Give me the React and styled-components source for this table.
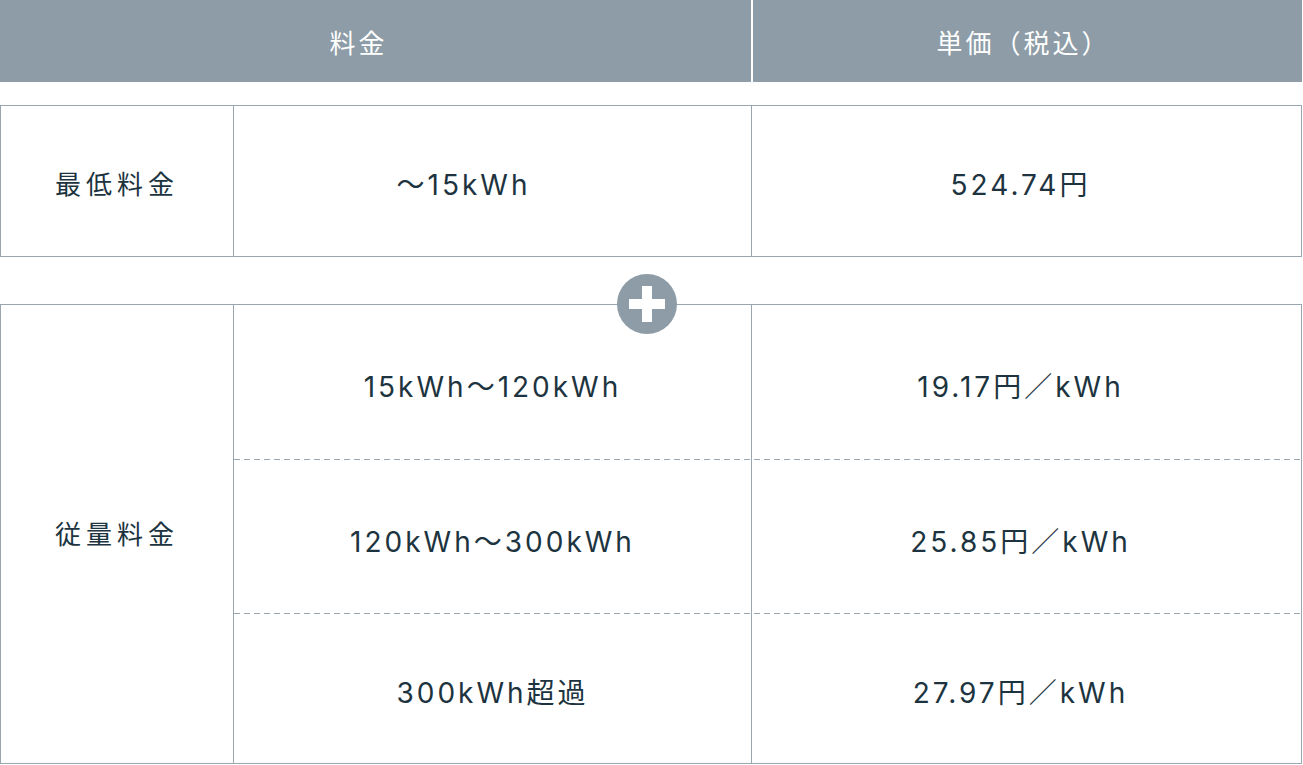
import React from 'react'
import styled, { createGlobalStyle } from 'styled-components'

const GlobalStyle = createGlobalStyle`
  body {
    margin: 0;
    background: #ffffff;
    font-family: Inter, "Noto Sans CJK JP", sans-serif;
  }
`

const LINE = '#9aa6af'
const SLATE = '#8d9ca6'

const PriceTable = styled.div`
  width: 1302px;
  display: flex;
  flex-direction: column;
  color: #1d3440;
  font-size: 28px;
  font-weight: 400;
  letter-spacing: 3px;
`

const HeadRow = styled.div`
  display: grid;
  grid-template-columns: 753px 1fr;
  height: 82px;
  background: ${SLATE};
  color: #ffffff;
  font-size: 26px;
  letter-spacing: 3px;
  margin-bottom: 23px;
`

const HeadCell = styled.div`
  display: flex;
  align-items: center;
  justify-content: center;
  padding-right: ${p => p.$shift || 0}px;
  border-right: ${p => (p.$divider ? '2px solid #ffffff' : 'none')};
`

const Section = styled.div`
  position: relative;
  display: grid;
  grid-template-columns: 233px 518px 1fr;
  height: ${p => p.$height}px;
  border: 1px solid ${LINE};
  box-sizing: border-box;
  margin-bottom: ${p => p.$gap || 0}px;
`

const LabelCell = styled.div`
  display: flex;
  align-items: center;
  justify-content: center;
  border-right: 1px solid ${LINE};
  font-size: 26px;
  letter-spacing: 5px;
  padding-top: ${p => p.$drop || 0}px;
  padding-bottom: ${p => p.$lift || 0}px;
`

const Rows = styled.div`
  grid-column: 2 / 4;
  display: grid;
  grid-template-rows: ${p => p.$rows};
`

const Row = styled.div`
  display: grid;
  grid-template-columns: 518px 1fr;
  background-image: ${p =>
    p.$dashed
      ? `linear-gradient(to right, ${LINE} 6px, transparent 6px)`
      : 'none'};
  background-size: 10px 1px;
  background-repeat: repeat-x;
  background-position: 0 100%;
`

const RangeCell = styled.div`
  display: flex;
  align-items: center;
  justify-content: center;
  border-right: 1px solid ${LINE};
  padding-right: ${p => p.$shift || 0}px;
  padding-top: ${p => p.$drop || 0}px;
`

const PriceCell = styled.div`
  display: flex;
  align-items: center;
  justify-content: center;
  padding-right: 12px;
  padding-top: ${p => p.$drop || 0}px;
`

const PlusBadge = styled.div`
  position: absolute;
  top: -31px;
  left: 616px;
  width: 60px;
  height: 60px;
  border-radius: 50%;
  background: ${SLATE};
  display: flex;
  align-items: center;
  justify-content: center;
  z-index: 2;
`

const tiers = [
  { range: '15kWh〜120kWh', price: '19.17円／kWh', dashed: true },
  { range: '120kWh〜300kWh', price: '25.85円／kWh', dashed: true },
  { range: '300kWh超過', price: '27.97円／kWh', dashed: false }
]

const App = () => {
  return (
    <>
      <GlobalStyle />
      <PriceTable>
        <HeadRow>
          <HeadCell $divider $shift={34}>料金</HeadCell>
          <HeadCell $shift={8}>単価（税込）</HeadCell>
        </HeadRow>

        <Section $height={152} $gap={47}>
          <LabelCell $drop={3}>最低料金</LabelCell>
          <Rows $rows="1fr">
            <Row>
              <RangeCell $shift={58} $drop={3}>〜15kWh</RangeCell>
              <PriceCell $drop={3}>524.74円</PriceCell>
            </Row>
          </Rows>
        </Section>

        <Section $height={460}>
          <PlusBadge>
            <svg width="36" height="36" viewBox="0 0 36 36">
              <rect x="0" y="13" width="36" height="10" fill="#ffffff" />
              <rect x="13" y="0" width="10" height="36" fill="#ffffff" />
            </svg>
          </PlusBadge>
          <LabelCell $lift={4}>従量料金</LabelCell>
          <Rows $rows="155px 154px 1fr">
            {tiers.map(t => (
              <Row key={t.range} $dashed={t.dashed}>
                <RangeCell $drop={5}>{t.range}</RangeCell>
                <PriceCell $drop={5}>{t.price}</PriceCell>
              </Row>
            ))}
          </Rows>
        </Section>
      </PriceTable>
    </>
  )
}

export default App
